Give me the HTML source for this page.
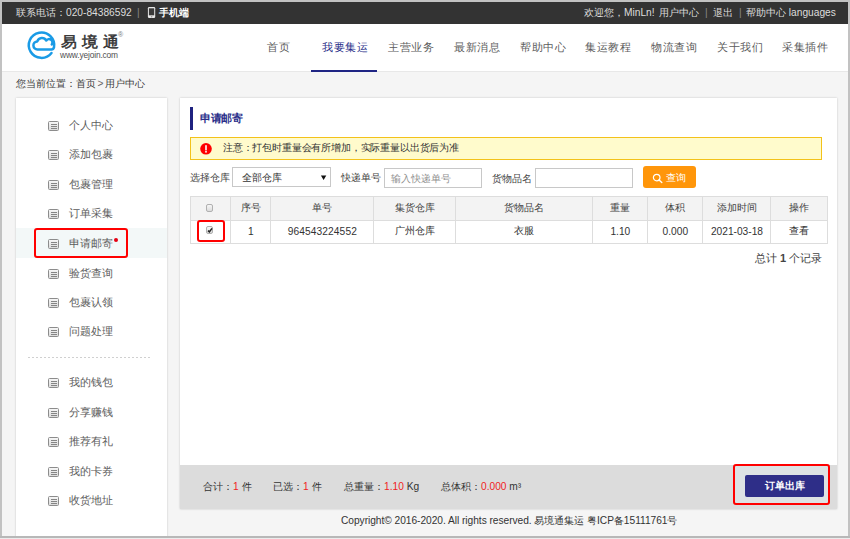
<!DOCTYPE html>
<html><head><meta charset="utf-8">
<style>
*{margin:0;padding:0;box-sizing:border-box}
html,body{width:850px;height:539px;overflow:hidden;background:#f5f5f5;font-family:"Liberation Sans",sans-serif;color:#333}
.a{position:absolute;white-space:nowrap;line-height:1}
#frame{position:absolute;left:0;top:0;width:850px;height:539px;border:2px solid #c2c2c2;border-bottom:none;pointer-events:none;z-index:50}
#fb{position:absolute;left:0;top:536px;width:850px;height:2px;background:#b8b8b8;z-index:50}
#fb2{position:absolute;left:0;top:538px;width:850px;height:1px;background:#ececec;z-index:50}
#topbar{position:absolute;left:0;top:0;width:850px;height:24px;background:#333;color:#ddd;font-size:10.2px}
#header{position:absolute;left:0;top:24px;width:850px;height:47.5px;background:#fff;border-bottom:1px solid #e8e8e8}
.nav{position:absolute;top:16.2px;font-size:11.4px;color:#5c5c5c;letter-spacing:0.6px}
.nav.on{color:#2b2f8a}
#uline{position:absolute;left:311px;top:45.6px;width:66px;height:2px;background:#1f2584}
#crumb{position:absolute;left:16px;top:78.5px;font-size:10.2px;color:#3a3a3a}
#side{position:absolute;left:16px;top:97px;width:151px;height:460px}
#sidebg{position:absolute;left:16px;top:97.5px;width:151px;height:460px;background:#fff;box-shadow:0 0 2px rgba(0,0,0,.2)}
.si{position:absolute;left:0;width:151px;height:30px}
.si .ic{position:absolute;left:32.2px;top:0px;width:10.8px;height:9.8px;border:1px solid #8c8c8c;border-radius:1.5px;background:linear-gradient(#f6f6f6,#dcdcdc)}
.si .ic i{position:absolute;left:1.8px;width:5.8px;height:1px;background:#858585}
.si .tx{position:absolute;left:53px;top:-0.8px;font-size:10.9px;color:#5c5c5c;line-height:10px}
#main{position:absolute;left:180px;top:97px;width:657px;height:411px}
#mainbg{position:absolute;left:180px;top:97.5px;width:657px;height:411px;background:#fff;box-shadow:0 0 2px rgba(0,0,0,.2)}
.m{position:absolute;white-space:nowrap;line-height:1}
.inp{position:absolute;border:1px solid #c8c8c8;background:#fff}
table{position:absolute;left:10px;top:99px;border-collapse:collapse;font-size:10.2px;color:#333}
td,th{border:1px solid #ddd;text-align:center;font-weight:normal;padding:0 0 1.6px 0;white-space:nowrap}
th{background:#f3f3f3;height:24px;color:#444}
td{height:23px}
.cb{display:inline-block;width:7.5px;height:8px;border:1px solid #b0b0b0;border-radius:2px;background:linear-gradient(#f6f6f6,#dcdcdc);vertical-align:middle;position:relative;left:-1.2px;top:-1px}
.foot{position:absolute;left:0;top:368px;width:657px;height:43.5px;background:#dcdcdc}
.red{color:#f01e1e}
</style></head><body>
<div id="topbar">
<span class="a" style="left:16px;top:7.8px;">联系电话：020-84386592</span>
<span class="a" style="left:137px;top:7.8px;color:#888">|</span>
<svg class="a" style="left:147px;top:6px" width="10" height="13" viewBox="0 0 10 13"><rect x="0.9" y="0.9" width="7.3" height="11.2" rx="1.3" fill="#e8e8e8"/><rect x="1.9" y="2.3" width="5.3" height="7" fill="#3a3a3a"/><rect x="3.9" y="10.4" width="1.4" height="0.9" fill="#777"/></svg>
<span class="a" style="left:159px;top:7.8px;color:#fff;font-weight:bold">手机端</span>
<span class="a" style="left:584px;top:7.8px;">欢迎您，MinLn!</span>
<span class="a" style="left:659px;top:7.8px;">用户中心</span>
<span class="a" style="left:705px;top:7.8px;color:#888">|</span>
<span class="a" style="left:713px;top:7.8px;">退出</span>
<span class="a" style="left:739px;top:7.8px;color:#888">|</span>
<span class="a" style="left:746px;top:7.8px;">帮助中心 languages</span>
</div>
<div id="header">
<svg class="a" style="left:24px;top:4px" width="40" height="40" viewBox="0 0 40 40">
    <path d="M27.5 25.0 A12.7 12.7 0 1 1 30.0 19.4 Q29.4 21.4 27.5 21.4 L13.5 21.4 A4 4 0 0 1 13.3 13.4 A5 5 0 0 1 22.3 12.5 A3.2 3.2 0 0 1 27.8 16.4" fill="none" stroke="#1a9be6" stroke-width="2.5" stroke-linecap="round" stroke-linejoin="round"/>
  </svg>
<div class="a" style="left:60.5px;top:11.2px;font-size:14.6px;color:#333;letter-spacing:4.8px;-webkit-text-stroke:0.5px #333;transform:scaleX(1.06);transform-origin:0 0">易境通</div>
<div class="a" style="left:118px;top:6.5px;font-size:7px;color:#777">®</div>
<div class="a" style="left:60px;top:26.8px;font-size:8.4px;color:#505050;letter-spacing:-0.15px">www.yejoin.com</div>
<div class="nav" style="left:267px">首页</div>
<div class="nav on" style="left:322px">我要集运</div>
<div class="nav" style="left:388px">主营业务</div>
<div class="nav" style="left:454px">最新消息</div>
<div class="nav" style="left:520px">帮助中心</div>
<div class="nav" style="left:585px">集运教程</div>
<div class="nav" style="left:651px">物流查询</div>
<div class="nav" style="left:717px">关于我们</div>
<div class="nav" style="left:782px">采集插件</div>
<div id="uline"></div>
</div>
<div id="crumb" class="a">您当前位置：首页<span style="margin:0 1.5px;color:#666">&gt;</span>用户中心</div>
<div id="sidebg"></div><div id="mainbg"></div>
<div id="side">
<div style="position:absolute;left:0;top:131px;width:151px;height:30px;background:#f3f8f8"></div>
<div class="si" style="top:24px"><div class="ic"><i style="top:2px"></i><i style="top:4px"></i><i style="top:6px"></i></div><div class="tx">个人中心</div></div>
<div class="si" style="top:53px"><div class="ic"><i style="top:2px"></i><i style="top:4px"></i><i style="top:6px"></i></div><div class="tx">添加包裹</div></div>
<div class="si" style="top:83px"><div class="ic"><i style="top:2px"></i><i style="top:4px"></i><i style="top:6px"></i></div><div class="tx">包裹管理</div></div>
<div class="si" style="top:112px"><div class="ic"><i style="top:2px"></i><i style="top:4px"></i><i style="top:6px"></i></div><div class="tx">订单采集</div></div>
<div class="si" style="top:142px"><div class="ic"><i style="top:2px"></i><i style="top:4px"></i><i style="top:6px"></i></div><div class="tx">申请邮寄</div></div>
<div class="si" style="top:172px"><div class="ic"><i style="top:2px"></i><i style="top:4px"></i><i style="top:6px"></i></div><div class="tx">验货查询</div></div>
<div class="si" style="top:201px"><div class="ic"><i style="top:2px"></i><i style="top:4px"></i><i style="top:6px"></i></div><div class="tx">包裹认领</div></div>
<div class="si" style="top:230px"><div class="ic"><i style="top:2px"></i><i style="top:4px"></i><i style="top:6px"></i></div><div class="tx">问题处理</div></div>
<div style="position:absolute;left:12px;top:260px;width:122px;height:1px;background:repeating-linear-gradient(90deg,#d0d0d0 0,#d0d0d0 2px,transparent 2px,transparent 4px)"></div>
<div class="si" style="top:281px"><div class="ic"><i style="top:2px"></i><i style="top:4px"></i><i style="top:6px"></i></div><div class="tx">我的钱包</div></div>
<div class="si" style="top:311px"><div class="ic"><i style="top:2px"></i><i style="top:4px"></i><i style="top:6px"></i></div><div class="tx">分享赚钱</div></div>
<div class="si" style="top:340px"><div class="ic"><i style="top:2px"></i><i style="top:4px"></i><i style="top:6px"></i></div><div class="tx">推荐有礼</div></div>
<div class="si" style="top:370px"><div class="ic"><i style="top:2px"></i><i style="top:4px"></i><i style="top:6px"></i></div><div class="tx">我的卡券</div></div>
<div class="si" style="top:399px"><div class="ic"><i style="top:2px"></i><i style="top:4px"></i><i style="top:6px"></i></div><div class="tx">收货地址</div></div>
<div style="position:absolute;left:18px;top:130.5px;width:94px;height:30.5px;border:2px solid #f00;border-radius:3px"></div>
<div style="position:absolute;left:97.8px;top:140.6px;width:4.5px;height:4.5px;border-radius:50%;background:#e60012"></div>
</div>
<div id="main">
<div style="position:absolute;left:10px;top:10px;width:3px;height:22.5px;background:#1f2280"></div>
<div class="m" style="left:20px;top:15.6px;font-size:11.05px;font-weight:bold;color:#2b2f8a;letter-spacing:-0.45px">申请邮寄</div>
<div style="position:absolute;left:10px;top:40px;width:632px;height:23px;background:#fffbcc;border:1px solid #f3c21a"></div>
<svg class="m" style="left:20px;top:45.5px" width="12" height="12" viewBox="0 0 12 12"><circle cx="6" cy="5.8" r="5.8" fill="#f00"/><rect x="5.1" y="2.2" width="1.8" height="5.2" fill="#ffe0e0"/><rect x="5.1" y="8.0" width="1.8" height="1.6" fill="#ffe0e0"/></svg>
<div class="m" style="left:43px;top:45.8px;font-size:10.2px;color:#333;letter-spacing:-0.17px">注意：打包时重量会有所增加，实际重量以出货后为准</div>
<div class="m" style="left:9.7px;top:76px;font-size:10.2px;color:#444">选择仓库</div>
<div class="inp" style="left:52px;top:70px;width:99px;height:20px"></div>
<div class="m" style="left:62px;top:76px;font-size:10.2px;color:#333">全部仓库</div>
<svg class="m" style="left:140px;top:77.6px" width="8" height="6" viewBox="0 0 8 6"><path d="M0.9 0.6 L6.3 0.6 L3.6 5.1 Z" fill="#111"/></svg>
<div class="m" style="left:161px;top:76px;font-size:10.2px;color:#444">快递单号</div>
<div class="inp" style="left:204px;top:71px;width:98px;height:19.5px"></div>
<div class="m" style="left:211px;top:76.5px;font-size:10.2px;color:#8f8f8f">输入快递单号</div>
<div class="m" style="left:312px;top:76.5px;font-size:10.2px;color:#444">货物品名</div>
<div class="inp" style="left:354.5px;top:71px;width:98.5px;height:19.5px"></div>
<div style="position:absolute;left:463px;top:69px;width:52.5px;height:21.5px;background:#ff960a;border-radius:3px"></div>
<svg class="m" style="left:472px;top:75.5px" width="11" height="11" viewBox="0 0 11 11"><circle cx="4.7" cy="4.6" r="3.3" fill="none" stroke="#fff" stroke-width="1.2"/><path d="M7.1 7 L9.8 9.6" stroke="#fff" stroke-width="1.4" stroke-linecap="round"/></svg>
<div class="m" style="left:486px;top:76px;font-size:10.2px;color:#fff">查询</div>
<table><colgroup><col style="width:40.3px"><col style="width:40.2px"><col style="width:102.7px"><col style="width:81.8px"><col style="width:137.5px"><col style="width:54.8px"><col style="width:55.2px"><col style="width:68.0px"><col style="width:56.1px"></colgroup><tr><th><span class="cb"></span></th><th>序号</th><th>单号</th><th>集货仓库</th><th>货物品名</th><th>重量</th><th>体积</th><th>添加时间</th><th>操作</th></tr><tr><td><span class="cb" style="top:-2px"><svg style="position:absolute;left:-1px;top:-1px" width="8" height="8" viewBox="0 0 8 8"><path d="M2 4.6 L3.4 5.9 L6 2.4" fill="none" stroke="#222" stroke-width="1.5"/></svg></span></td><td>1</td><td><span style="letter-spacing:0.1px">964543224552</span></td><td>广州仓库</td><td>衣服</td><td>1.10</td><td>0.000</td><td>2021-03-18</td><td>查看</td></tr></table>
<div style="position:absolute;left:16.8px;top:123.2px;width:27.8px;height:21.6px;border:2px solid #f00;border-radius:3px"></div>
<div class="m" style="left:575px;top:156px;font-size:11.05px;color:#444">总计 <b>1</b> 个记录</div>
<div class="foot">
<div class="m" style="left:23px;top:17px;font-size:10.2px;color:#333">合计：<span class="red">1</span> 件</div>
<div class="m" style="left:93px;top:17px;font-size:10.2px;color:#333">已选：<span class="red">1</span> 件</div>
<div class="m" style="left:164px;top:17px;font-size:10.2px;color:#333">总重量：<span class="red">1.10</span> Kg</div>
<div class="m" style="left:261px;top:17px;font-size:10.2px;color:#333">总体积：<span class="red">0.000</span> m³</div>
<div style="position:absolute;left:553px;top:-1.2px;width:97px;height:41px;border:2px solid #f00;border-radius:3px;background:#dde2e4"></div>
<div style="position:absolute;left:565px;top:10px;width:79px;height:21.5px;background:#2e2e88;border-radius:2px"></div>
<div class="m" style="left:584.5px;top:16px;font-size:10.2px;color:#fff;font-weight:bold">订单出库</div>
</div>
</div>
<div class="a" style="left:341px;top:515.5px;font-size:10.2px;color:#333;letter-spacing:-0.035px">Copyright© 2016-2020. All rights reserved. 易境通集运 粤ICP备15111761号</div>
<div id="frame"></div><div id="fb"></div><div id="fb2"></div>
</body></html>
